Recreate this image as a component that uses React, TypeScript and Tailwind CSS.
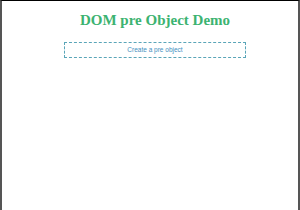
export default function App() {
  return (
    <div className="w-[300px] h-[210px] bg-white border-t border-t-black border-x-2 border-x-[#555] overflow-hidden pl-[10px]">
      <h1 className="text-center text-[15px] font-bold text-[#3cb371] mt-[10px] leading-[18px]" style={{ fontFamily: '"Liberation Serif", serif' }}>
        DOM pre Object Demo
      </h1>
      <div className="flex justify-center mt-[13px]">
        <div className="w-[182px] h-[16px] border border-dashed border-[#5aa5b8] flex items-center justify-center text-[6.5px] text-[#3f8fc0]" style={{ fontFamily: '"Liberation Sans", sans-serif' }}>
          Create a pre object
        </div>
      </div>
    </div>
  );
}
